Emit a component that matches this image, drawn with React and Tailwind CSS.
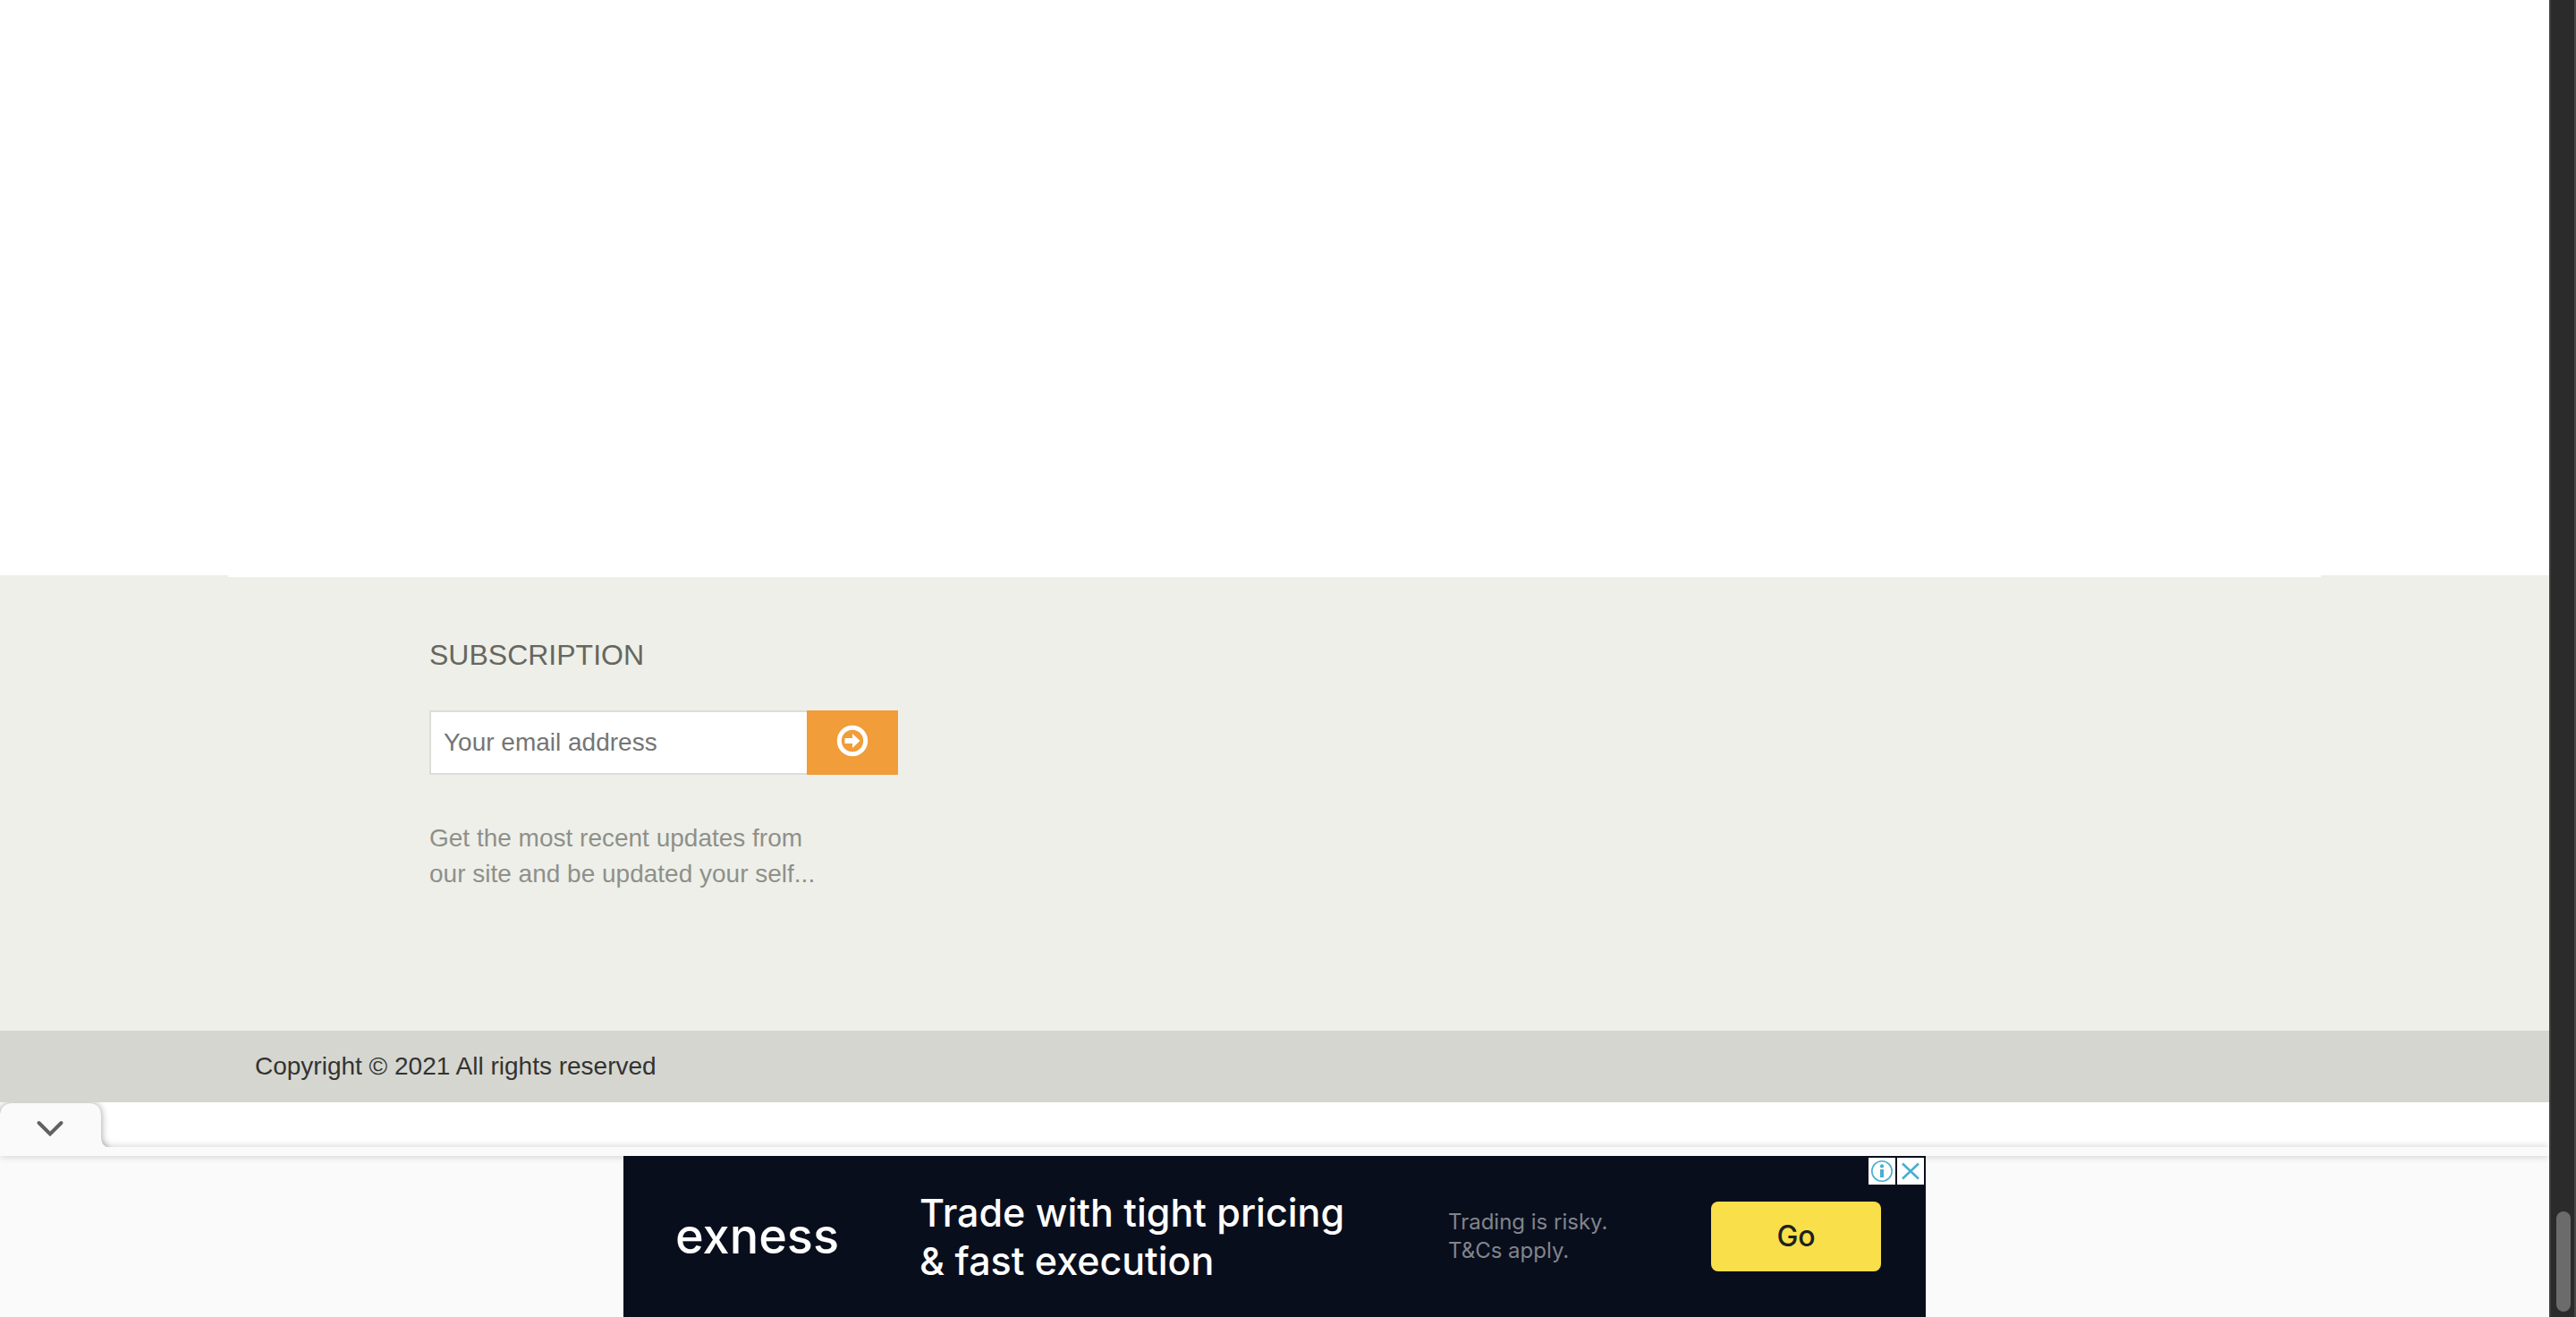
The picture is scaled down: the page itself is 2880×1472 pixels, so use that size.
import React from "react";

function Subscription() {
  return (
    <form className="w-[524px]" onSubmit={(e) => e.preventDefault()}>
      <h2 className="text-[32px] leading-[40px] text-[#666760]">SUBSCRIPTION</h2>
      <div className="mt-[42px] flex h-[72px]">
        <input
          type="email"
          aria-label="Your email address"
          placeholder="Your email address"
          className="min-w-0 flex-1 border-2 border-r-0 border-[#dcdddb] bg-white px-[14px] text-[28px] text-[#555] outline-none placeholder:text-[#757575]"
        />
        <button
          type="submit"
          aria-label="Subscribe"
          className="flex w-[102px] items-start justify-center bg-[#f09d3a] pt-4"
        >
          <svg viewBox="0 0 36 36" className="h-9 w-9" aria-hidden="true">
            <circle cx="18" cy="18" r="14.7" fill="none" stroke="#fff" strokeWidth="5" />
            <path d="M9.5 15h8.5v-5l8.5 8-8.5 8v-5H9.5z" fill="#fff" />
          </svg>
        </button>
      </div>
      <p className="mt-[51px] text-[28px] leading-[40px] text-[#8f908a]">
        Get the most recent updates from
        <br />
        our site and be updated your self...
      </p>
    </form>
  );
}

function Footer() {
  return (
    <footer>
      <div className="bg-[#eeefe9]">
        <div className="mx-auto max-w-[2340px] border-t-2 border-white px-[30px] pt-[67px] pb-[155px]">
          <div className="pl-[195px]">
            <Subscription />
          </div>
        </div>
      </div>
      <div className="bg-[#d5d6cf]">
        <p className="mx-auto max-w-[2340px] px-[30px] py-5 text-[28px] leading-[40px] text-[#333]">
          Copyright © 2021 All rights reserved
        </p>
      </div>
    </footer>
  );
}

function AdBanner() {
  return (
    <div className="relative grid h-[180px] w-[1456px] grid-cols-[273px_591px_294px_190px] items-center overflow-hidden bg-[#090e1d] pl-[58px] font-['Inter',sans-serif]">
      <span className="text-[54px] font-medium leading-[60px] text-white">exness</span>
      <p className="text-[43px] font-medium leading-[54px] text-white">
        Trade with tight pricing
        <br />
        &amp; fast execution
      </p>
      <p className="text-[24px] leading-[32px] text-[#81858a]">
        Trading is risky.
        <br />
        T&amp;Cs apply.
      </p>
      <button
        type="button"
        className="h-[78px] rounded-lg bg-[#f9df4a] text-[32px] font-medium text-[#1b2220]"
      >
        Go
      </button>
      <div className="absolute top-[2px] right-[2px] flex gap-[2px]">
        <button type="button" aria-label="Ad information" className="h-[30px] w-[30px] bg-white">
          <svg viewBox="0 0 30 30" className="h-full w-full" aria-hidden="true">
            <circle cx="15" cy="15" r="11.2" fill="none" stroke="#4aaed0" strokeWidth="1.6" />
            <circle cx="15" cy="9.4" r="2.1" fill="#4aaed0" />
            <path d="M13 13h4v9h-4z" fill="#4aaed0" />
          </svg>
        </button>
        <button type="button" aria-label="Close ad" className="h-[30px] w-[30px] bg-white">
          <svg viewBox="0 0 30 30" className="h-full w-full" aria-hidden="true">
            <path d="M6 6.5l18 17M24 6.5l-18 17" stroke="#4aaed0" strokeWidth="2.6" fill="none" />
          </svg>
        </button>
      </div>
    </div>
  );
}

function AdDock() {
  return (
    <aside className="relative pt-[50px]">
      <button
        type="button"
        aria-label="Collapse ad"
        className="absolute top-0 left-0 z-10 h-[50px] w-[126px] [clip-path:inset(0px_-10px_0px_0px)]"
      >
        <svg viewBox="0 0 126 50" className="h-full w-full overflow-visible" aria-hidden="true">
          <path
            d="M-10 70V13L0 13Q2 1 14 1H99Q113 1 113 16V38Q113 47 119 50V70z"
            fill="#fafafa"
            className="drop-shadow-[0_0_4px_rgba(0,0,0,0.4)]"
          />
          <path
            d="M43.500 23L56 35.500L68.500 23"
            fill="none"
            stroke="#616161"
            strokeWidth="4"
            strokeLinecap="round"
          />
        </svg>
      </button>
      <div className="bg-[#fafafa]">
        <div className="h-[10px] bg-[#fafafa] shadow-[0_0_10px_rgba(0,0,0,0.2)]" />
        <div className="relative flex justify-center">
          <AdBanner />
        </div>
      </div>
    </aside>
  );
}

function ScrollTrack() {
  return (
    <div className="relative flex w-[30px] shrink-0 flex-col justify-end border-r-2 border-l-2 border-l-[#3d3f3f] border-r-[#484848] bg-[#2b2b2b] pr-1 pb-[6px] pl-[6px]">
      <div className="h-[112px] rounded-full bg-[#6b6b6b]" />
    </div>
  );
}

export default function App() {
  return (
    <div className="flex min-h-screen bg-white font-['Liberation_Sans',Arial,sans-serif]">
      <div className="flex min-w-0 flex-1 flex-col">
        <main className="flex-1" />
        <Footer />
        <AdDock />
      </div>
      <ScrollTrack />
    </div>
  );
}
